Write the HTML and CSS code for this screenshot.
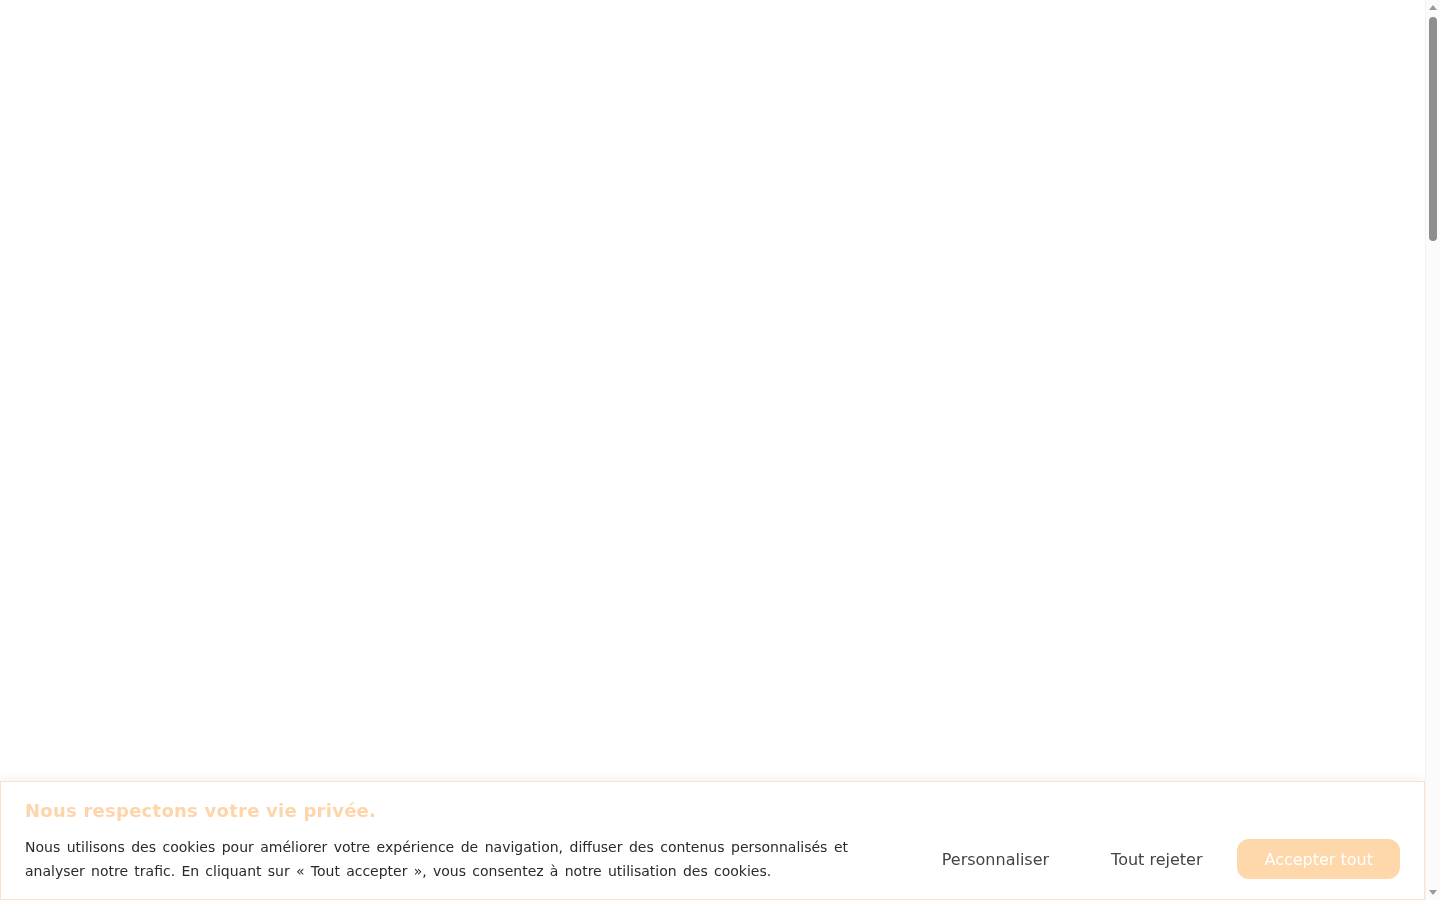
FILE: index.html
```html
<!DOCTYPE html>
<html lang="fr">
<head>
<meta charset="utf-8">
<title>Cookies</title>
<link rel="stylesheet" href="styles.css">
</head>
<body>
<main class="page"></main>
<section class="cookie-banner" aria-label="Consentement aux cookies">
  <h2 class="cookie-title">Nous respectons votre vie privée.</h2>
  <div class="cookie-row">
    <p class="cookie-text">Nous utilisons des cookies pour améliorer votre expérience de navigation, diffuser des contenus personnalisés et analyser notre trafic. En cliquant sur « Tout accepter », vous consentez à notre utilisation des cookies.</p>
    <div class="cookie-actions">
      <button class="btn btn-link" type="button">Personnaliser</button>
      <button class="btn btn-link" type="button">Tout rejeter</button>
      <button class="btn btn-accept" type="button">Accepter tout</button>
    </div>
  </div>
</section>
<div class="scrollbar" aria-hidden="true">
  <span class="sb-arrow sb-up"></span>
  <span class="sb-track"><span class="sb-thumb"></span></span>
  <span class="sb-arrow sb-down"></span>
</div>
</body>
</html>
```

FILE: styles.css
```css
html, body {
  margin: 0;
  padding: 0;
  background: #ffffff;
  font-family: "DejaVu Sans", sans-serif;
}

.page {
  height: 3495px;
}

.cookie-banner {
  position: fixed;
  left: 0;
  right: 15px;
  bottom: 0;
  box-sizing: border-box;
  background: #ffffff;
  border: 1px solid #fbe2cc;
  box-shadow: 0 -3px 10px rgba(0, 0, 0, 0.05);
  padding: 17px 24px 16px;
}

.cookie-title {
  margin: 0 0 12px;
  font-size: 18px;
  line-height: 24px;
  font-weight: bold;
  color: #fed5aa;
  letter-spacing: 0.25px;
}

.cookie-row {
  display: flex;
  align-items: center;
}

.cookie-text {
  margin: 0;
  width: 823px;
  flex: none;
  font-size: 14px;
  line-height: 24px;
  color: #2a2a2a;
  text-align: justify;
  word-spacing: 1.8px;
}

.cookie-actions {
  margin-left: auto;
  display: flex;
  align-items: center;
  gap: 8px;
}

.btn {
  font-family: "DejaVu Sans", sans-serif;
  font-size: 16px;
  height: 40px;
  padding: 0 27px;
  border: none;
  border-radius: 12px;
  background: transparent;
  cursor: pointer;
}

.btn-link {
  color: #444444;
}

.btn-accept {
  background: #fed7aa;
  color: #ffffff;
}

/* decorative classic scrollbar, as seen in the reference */
.scrollbar {
  position: fixed;
  top: 0;
  right: 0;
  width: 15px;
  height: 100vh;
  background: #fbfbfb;
  border-left: 1px solid #f2f2f2;
  box-sizing: border-box;
  display: flex;
  flex-direction: column;
  align-items: center;
}

.sb-arrow {
  flex: none;
  width: 0;
  height: 0;
  border-left: 4px solid transparent;
  border-right: 4px solid transparent;
}

.sb-up {
  margin-top: 5px;
  border-bottom: 5px solid #9a9a9a;
}

.sb-down {
  margin-bottom: 5px;
  border-top: 5px solid #9a9a9a;
}

.sb-track {
  flex: 1;
  display: flex;
  flex-direction: column;
  align-items: center;
  padding-top: 7px;
}

.sb-thumb {
  width: 8px;
  height: 224px;
  border-radius: 4px;
  background: #8e8e8e;
}
```
